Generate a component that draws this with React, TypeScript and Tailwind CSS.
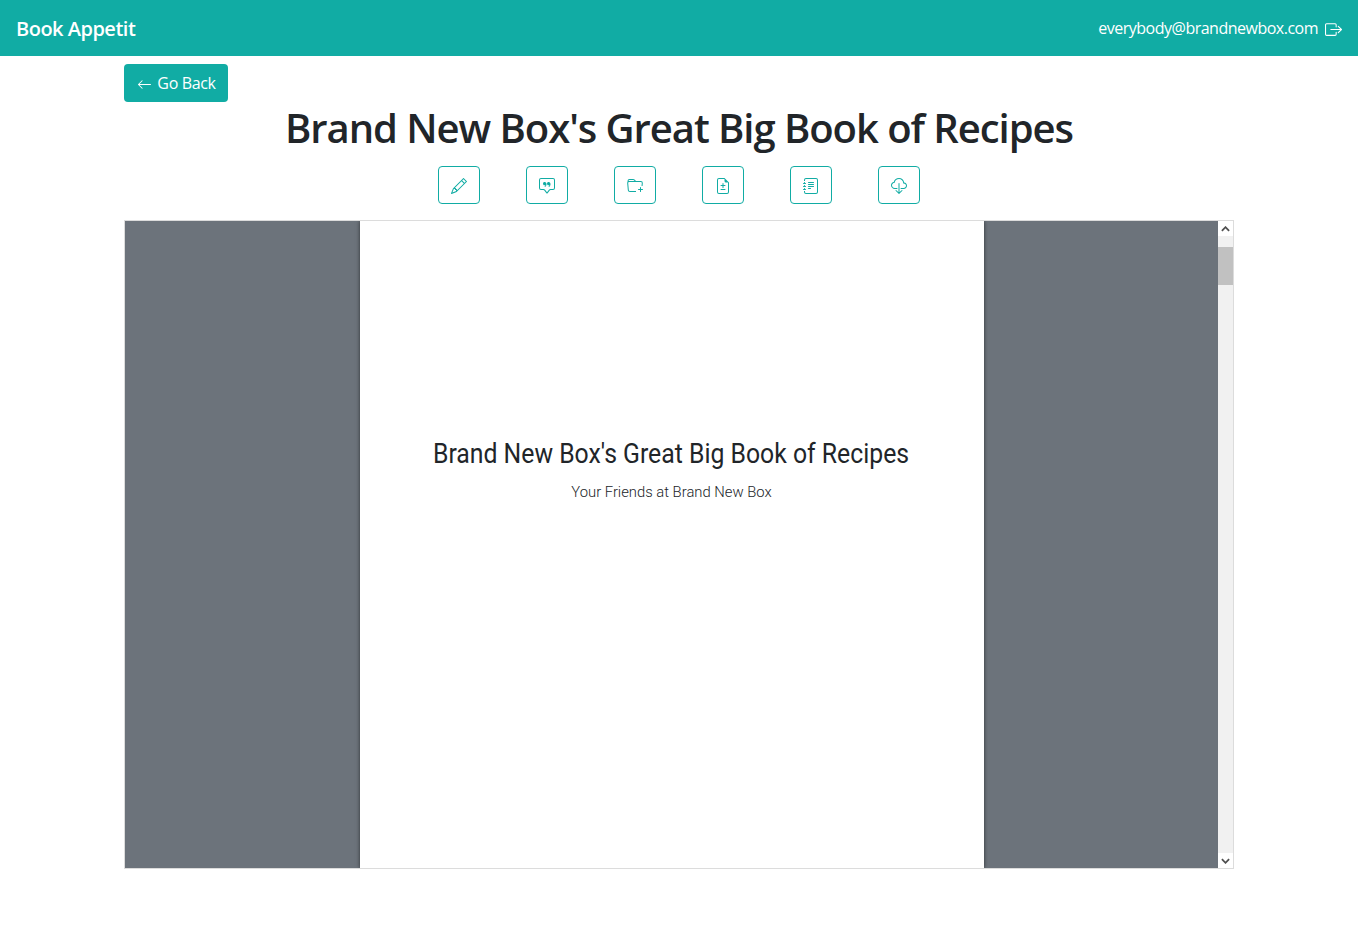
import type { FC } from "react";
import {
  BsArrowLeft,
  BsBoxArrowRight,
  BsChatSquareQuote,
  BsCloudDownload,
  BsFileEarmarkDiff,
  BsFolderPlus,
  BsJournalText,
  BsPencil,
} from "react-icons/bs";

const actions = [
  { name: "Edit", icon: BsPencil },
  { name: "Quote", icon: BsChatSquareQuote },
  { name: "Add folder", icon: BsFolderPlus },
  { name: "Diff", icon: BsFileEarmarkDiff },
  { name: "Contents", icon: BsJournalText },
  { name: "Download", icon: BsCloudDownload },
];

const App: FC = () => {
  return (
    <div className="min-h-[927px] bg-white font-['Open_Sans','Noto_Sans',sans-serif] text-[#212529]">
      <nav className="flex h-14 items-center justify-between bg-[#11aca4] pl-4 pr-4 text-white">
        <span className="mt-[2px] text-[20px] font-semibold tracking-[-0.5px]">Book Appetit</span>
        <div className="flex items-center gap-[7px]">
          <span className="text-[16px] tracking-[-0.5px]">everybody@brandnewbox.com</span>
          <BsBoxArrowRight className="mt-[2px] h-[17px] w-[17px]" />
        </div>
      </nav>

      <main className="mx-auto w-[1110px] pt-2">
        <button
          type="button"
          className="flex h-[38px] w-[104px] items-center justify-center gap-[5px] rounded bg-[#11aca4] pl-[1px] text-[16px] tracking-[-0.35px] text-white"
        >
          <BsArrowLeft className="mt-[2px] h-[15px] w-[15px]" />
          Go Back
        </button>

        <h1 className="mt-[2px] text-center text-[40px] leading-[48px] font-semibold tracking-[-1.05px]">
          Brand New Box's Great Big Book of Recipes
        </h1>

        <div className="mt-[14px] flex justify-center gap-[46px]">
          {actions.map(({ name, icon: Icon }) => (
            <button
              key={name}
              type="button"
              aria-label={name}
              className="flex h-[38px] w-[42px] items-center justify-center rounded border border-[#11aca4] text-[#11aca4]"
            >
              <Icon className="mt-[2px] h-4 w-4" />
            </button>
          ))}
        </div>

        <div className="mt-[16px] flex h-[649px] border border-[#dcdcdc] bg-[#6c737b]">
          <div className="flex min-w-0 flex-1 justify-center overflow-hidden">
            <div className="flex h-full w-[624px] flex-col items-center bg-white pt-[215px] shadow-[0_0_4px_rgba(0,0,0,0.6)]">
              <h2 className="origin-center scale-x-[0.885] whitespace-nowrap font-['Roboto',sans-serif] text-[28px] leading-[36px] font-normal">
                Brand New Box's Great Big Book of Recipes
              </h2>
              <p className="mt-[10px] font-['Roboto',sans-serif] text-[14.8px] leading-[20px] font-light">
                Your Friends at Brand New Box
              </p>
            </div>
          </div>

          <div className="flex w-[15px] flex-col bg-[#f1f1f1]">
            <div className="flex h-[15px] items-center justify-center bg-white">
              <svg viewBox="0 0 10 6" className="h-[6px] w-[9px]" fill="none" stroke="#505050" strokeWidth="2">
                <path d="M1 5l4-4 4 4" />
              </svg>
            </div>
            <div className="mt-[11px] h-[38px] bg-[#c1c1c1]" />
            <div className="flex-1" />
            <div className="flex h-[15px] items-center justify-center bg-white">
              <svg viewBox="0 0 10 6" className="h-[6px] w-[9px]" fill="none" stroke="#505050" strokeWidth="2">
                <path d="M1 1l4 4 4-4" />
              </svg>
            </div>
          </div>
        </div>
      </main>
    </div>
  );
};

export default App;
